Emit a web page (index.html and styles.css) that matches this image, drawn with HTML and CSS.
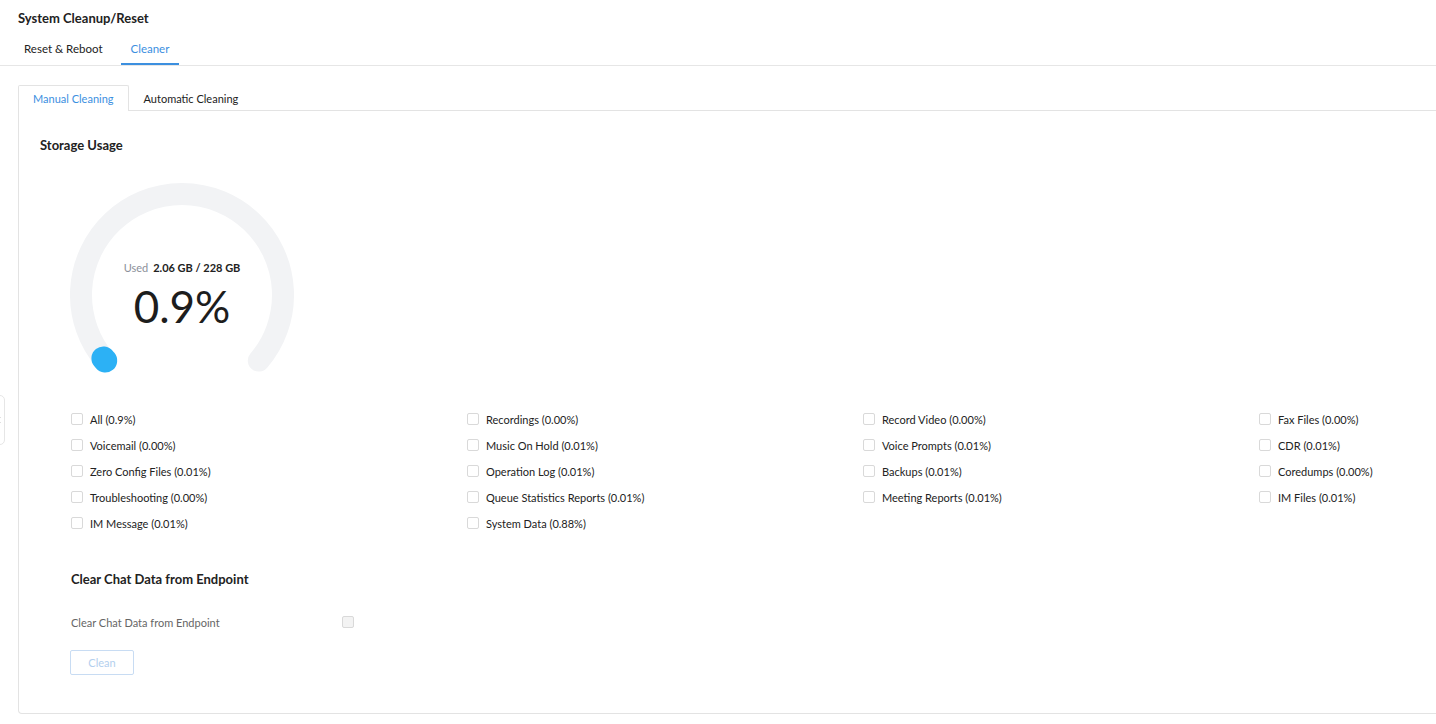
FILE: index.html
```html
<!DOCTYPE html>
<html lang="en">
<head>
    <meta charset="UTF-8">
    <title>System Cleanup/Reset</title>
    <meta name="viewport" content="width=device-width, initial-scale=1.0">
    <link rel="stylesheet" href="styles.css">
</head>
<body>
<div class="side-handle">
    <svg width="6" height="8" viewBox="0 0 6 8"><path d="M5 1 L2 4 L5 7" fill="none" stroke="#333" stroke-width="1.2"/></svg>
</div>

<div class="page">
    <h1 class="page-title">System Cleanup/Reset</h1>

    <nav class="top-tabs">
        <a class="top-tab">Reset &amp; Reboot</a>
        <a class="top-tab active">Cleaner</a>
    </nav>

    <div class="content">
        <div class="sub-tabs">
            <span class="sub-tab active">Manual Cleaning</span>
            <span class="sub-tab">Automatic Cleaning</span>
        </div>

        <div class="tab-panel">
            <h2 class="section-title">Storage Usage</h2>

            <div class="gauge">
                <svg width="224" height="200" viewBox="0 0 224 200">
                    <!-- track: 260deg arc, open at the bottom -->
                    <path d="M35.2 177.6 A101 101 0 1 1 188.8 177.6" fill="none" stroke="#f2f3f5" stroke-width="22" stroke-linecap="round"/>
                    <!-- used part -->
                    <path d="M35.2 177.6 A101 101 0 0 1 33.4 175.4" fill="none" stroke="#2cb1f5" stroke-width="24" stroke-linecap="round"/>
                </svg>
                <div class="gauge-text">
                    <div class="gauge-used"><span class="used-label">Used</span><b>2.06 GB / 228 GB</b></div>
                    <div class="gauge-percent">0.9%</div>
                </div>
            </div>

            <div class="clean-grid">
                <label class="clean-item"><input type="checkbox">All (0.9%)</label>
                <label class="clean-item"><input type="checkbox">Recordings (0.00%)</label>
                <label class="clean-item"><input type="checkbox">Record Video (0.00%)</label>
                <label class="clean-item"><input type="checkbox">Fax Files (0.00%)</label>

                <label class="clean-item"><input type="checkbox">Voicemail (0.00%)</label>
                <label class="clean-item"><input type="checkbox">Music On Hold (0.01%)</label>
                <label class="clean-item"><input type="checkbox">Voice Prompts (0.01%)</label>
                <label class="clean-item"><input type="checkbox">CDR (0.01%)</label>

                <label class="clean-item"><input type="checkbox">Zero Config Files (0.01%)</label>
                <label class="clean-item"><input type="checkbox">Operation Log (0.01%)</label>
                <label class="clean-item"><input type="checkbox">Backups (0.01%)</label>
                <label class="clean-item"><input type="checkbox">Coredumps (0.00%)</label>

                <label class="clean-item"><input type="checkbox">Troubleshooting (0.00%)</label>
                <label class="clean-item"><input type="checkbox">Queue Statistics Reports (0.01%)</label>
                <label class="clean-item"><input type="checkbox">Meeting Reports (0.01%)</label>
                <label class="clean-item"><input type="checkbox">IM Files (0.01%)</label>

                <label class="clean-item"><input type="checkbox">IM Message (0.01%)</label>
                <label class="clean-item"><input type="checkbox">System Data (0.88%)</label>
            </div>

            <div class="chat-section">
                <h2 class="section-title">Clear Chat Data from Endpoint</h2>
                <div class="form-row">
                    <span class="form-label">Clear Chat Data from Endpoint</span>
                    <input type="checkbox" disabled>
                </div>
                <button class="btn-clean" disabled>Clean</button>
            </div>
        </div>
    </div>
</div>
</body>
</html>
```

FILE: styles.css
```css
/* base */
body, html {
    margin: 0;
    padding: 0;
    font-family: "Lato", "Noto Sans", Arial, sans-serif;
    background-color: #fff;
    color: #222;
    overflow: hidden;
}
* { box-sizing: border-box; }

.page {
    width: 1800px;
}

.page-title {
    margin: 0;
    padding: 10px 18px 0;
    font-size: 13px;
    line-height: 16px;
    font-weight: 700;
}

/* top tabs */
.top-tabs {
    display: flex;
    gap: 8px;
    padding-left: 14px;
    border-bottom: 1px solid #e6e6e6;
}
.top-tab {
    padding: 15px 10px 6px;
    font-size: 11.5px;
    line-height: 16px;
    color: #222;
    border-bottom: 2px solid transparent;
    cursor: pointer;
}
.top-tab.active {
    color: #3c8fdf;
    border-bottom-color: #3c8fdf;
}

.content {
    padding: 19px 0 0 18px;
}

/* inner tabs */
.sub-tabs {
    display: flex;
    height: 26px;
    border-bottom: 1px solid #e3e3e3;
}
.sub-tab {
    padding: 0 14px;
    font-size: 11px;
    line-height: 25px;
    color: #222;
    border: 1px solid transparent;
    border-bottom: none;
    cursor: pointer;
}
.sub-tab.active {
    color: #3c8fdf;
    background: #fff;
    border-color: #e3e3e3;
    border-radius: 2px 2px 0 0;
    height: 26px;
    margin-bottom: -1px;
}

.tab-panel {
    border: 1px solid #e3e3e3;
    border-top: none;
    border-radius: 0 0 4px 4px;
    padding: 26px 21px 38px;
}

.section-title {
    margin: 0;
    font-size: 13px;
    line-height: 16px;
    font-weight: 700;
    color: #222;
}

/* storage gauge */
.gauge {
    position: relative;
    width: 224px;
    height: 190px;
    margin: 30px 0 0 30px;
}
.gauge svg { display: block; }
.gauge-text {
    position: absolute;
    top: 77px;
    left: 0;
    width: 224px;
    text-align: center;
}
.gauge-used {
    font-size: 11px;
    line-height: 16px;
}
.used-label {
    color: #8b909a;
    margin-right: 5px;
}
.gauge-used b { font-weight: 700; }
.gauge-percent {
    margin-top: 8px;
    font-size: 44px;
    line-height: 44px;
    color: #1d1d1d;
}

/* checkbox grid */
.clean-grid {
    display: grid;
    grid-template-columns: repeat(4, 396px);
    grid-auto-rows: 26px;
    margin: 33px 0 0 31px;
}
.clean-item {
    display: flex;
    align-items: center;
    gap: 7px;
    font-size: 11px;
    color: #222;
    cursor: pointer;
}
input[type="checkbox"] {
    appearance: none;
    -webkit-appearance: none;
    width: 12px;
    height: 12px;
    margin: 0;
    border: 1px solid #d9d9d9;
    border-radius: 2px;
    background: #fff;
    flex-shrink: 0;
}
input[type="checkbox"]:disabled {
    background: #f3f3f3;
}

.chat-section {
    padding-left: 31px;
    margin-top: 35px;
}
.form-row {
    display: flex;
    align-items: center;
    margin-top: 27px;
    height: 16px;
}
.form-label {
    width: 271px;
    font-size: 11px;
    color: #666;
}
.btn-clean {
    display: block;
    margin: 20px 0 0 -1px;
    width: 64px;
    height: 25px;
    padding: 0;
    font-family: inherit;
    font-size: 11px;
    color: #b3cfee;
    background: #fff;
    border: 1px solid #c8dcf3;
    border-radius: 2px;
}

/* collapsed side menu handle */
.side-handle {
    position: absolute;
    left: -16px;
    top: 395px;
    width: 21px;
    height: 50px;
    padding-right: 3px;
    border: 1px solid #e6e6e6;
    border-radius: 0 5px 5px 0;
    background: #fff;
    display: flex;
    align-items: center;
    justify-content: flex-end;
}
```
